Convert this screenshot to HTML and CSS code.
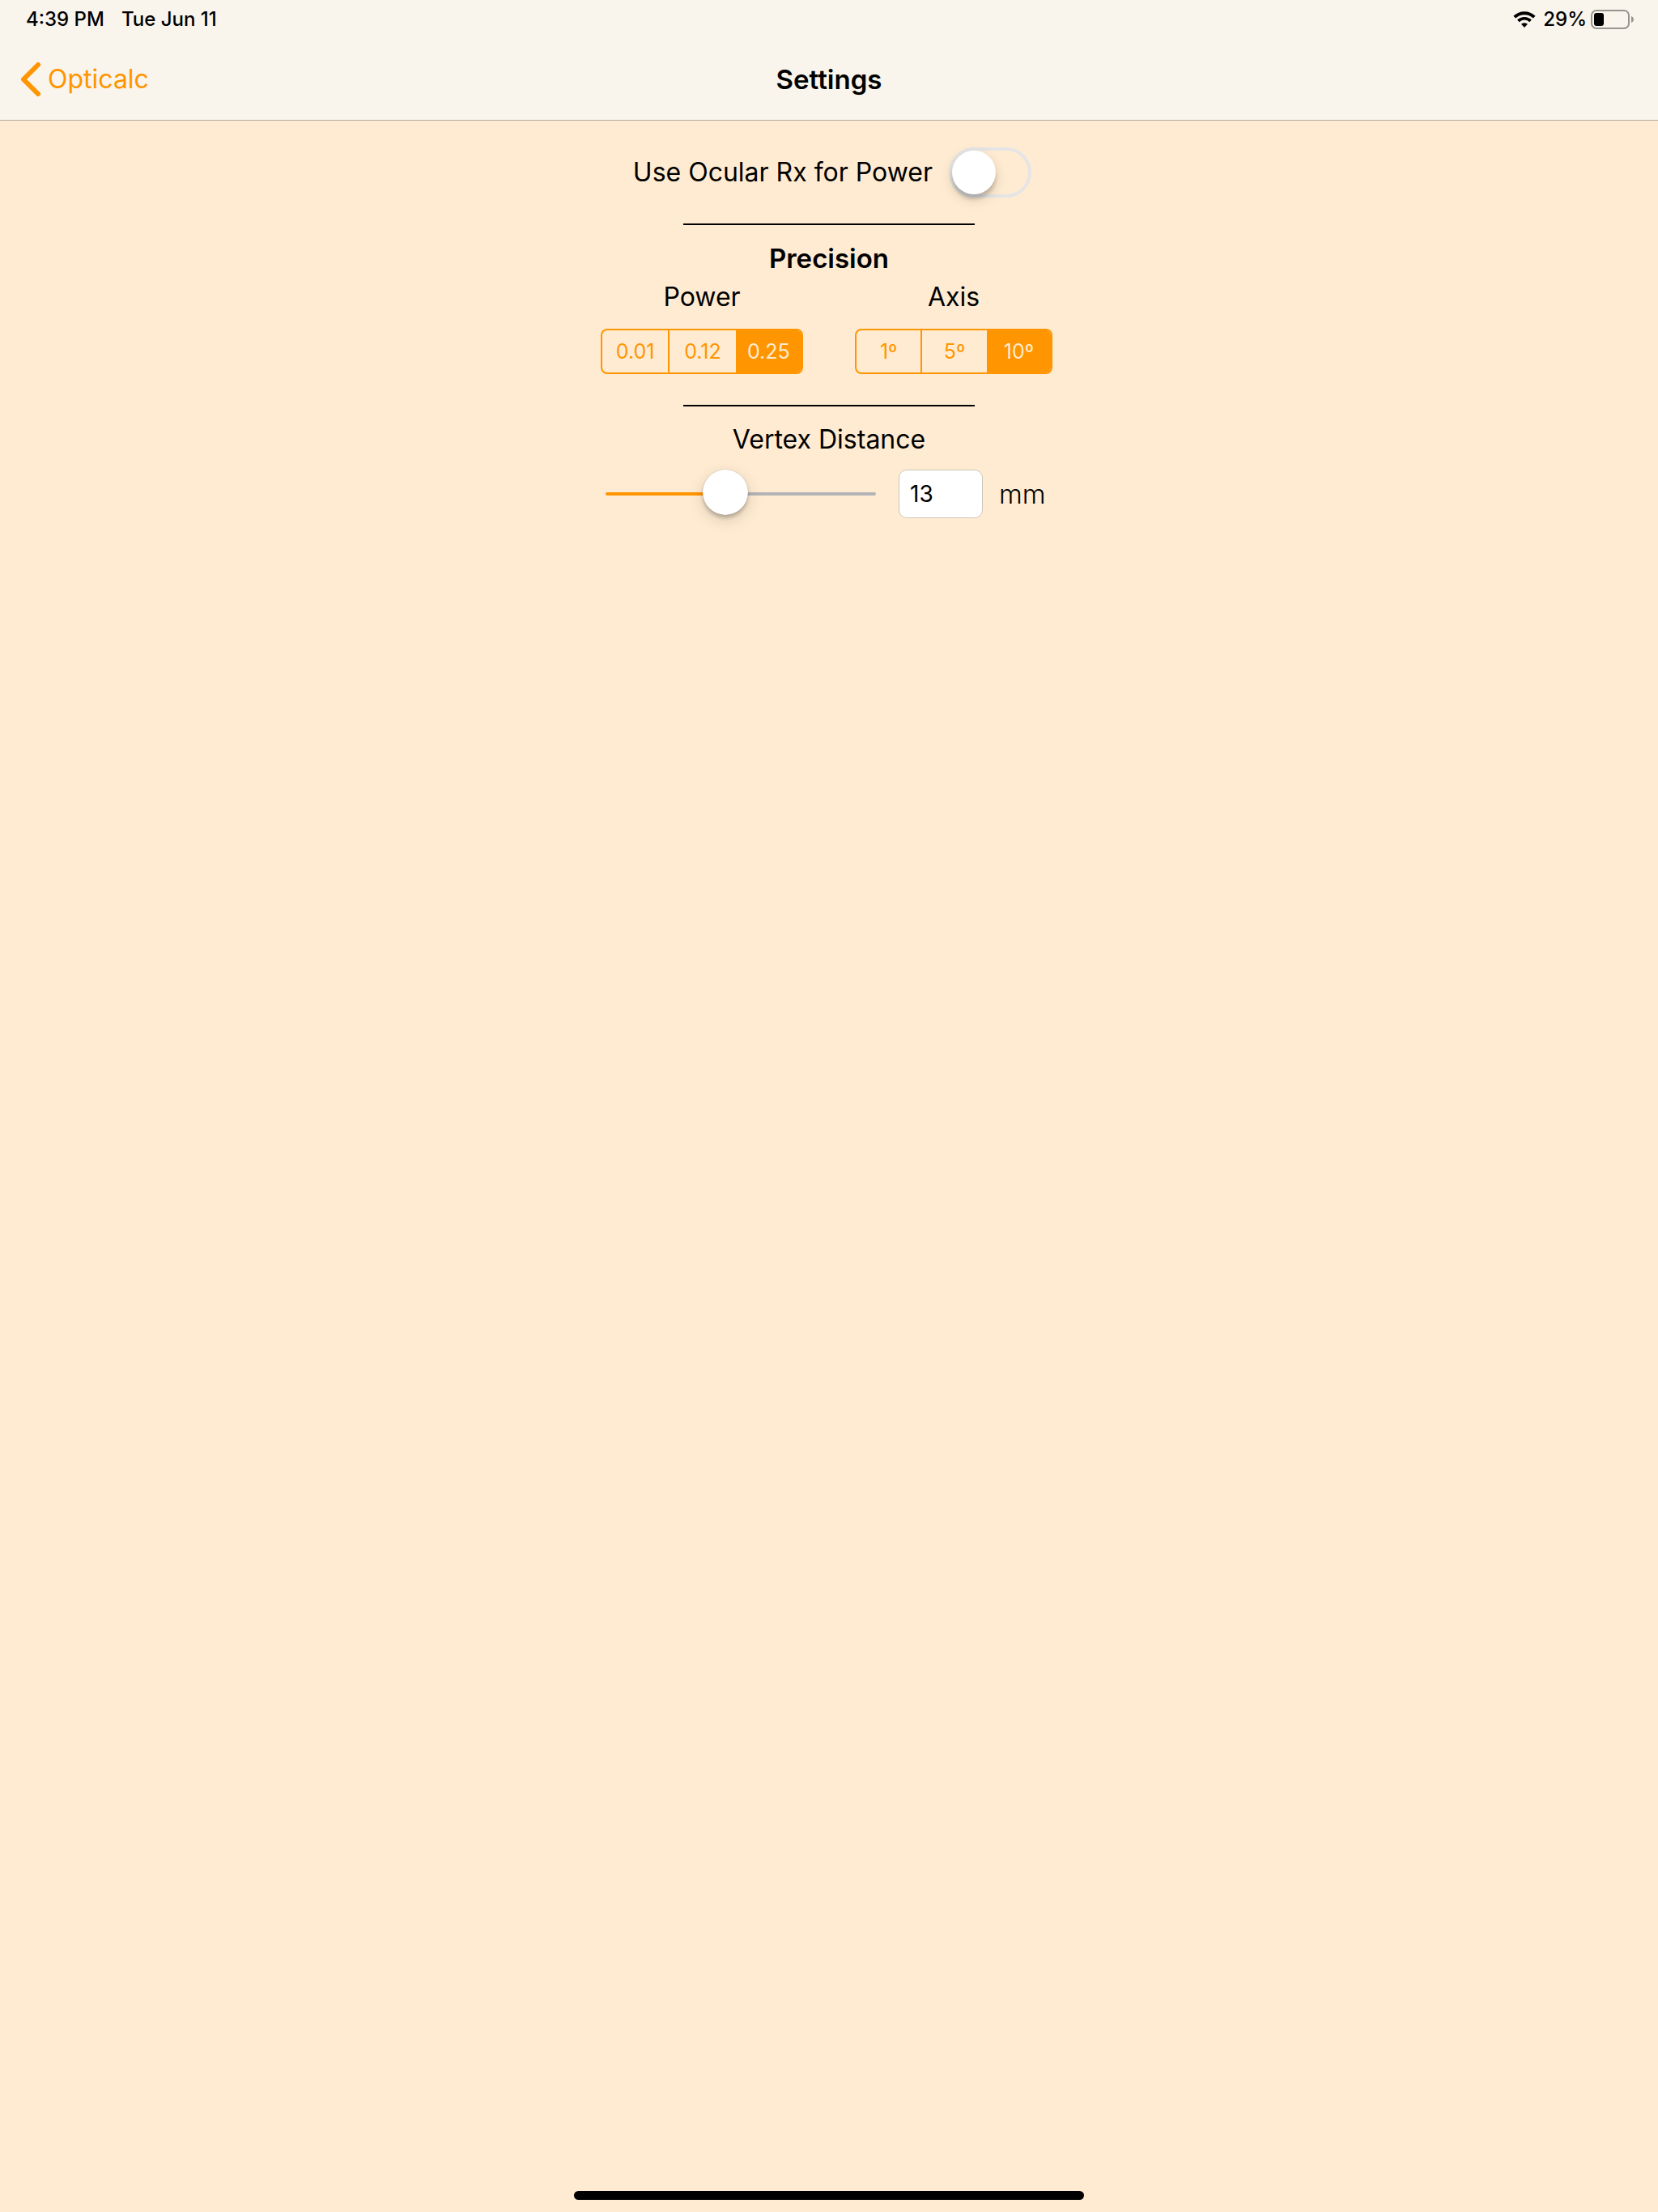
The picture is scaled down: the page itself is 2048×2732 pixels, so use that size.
FILE: index.html
```html
<!DOCTYPE html>
<html lang="en">
  <head>
    <meta charset="utf-8">
    <meta name="viewport" content="width=device-width, initial-scale=1">
    <title>Settings</title>
    <link rel="stylesheet" href="styles.css">
  </head>
  <body>
    <header class="header">
      <div class="status-bar">
        <span>4:39 PM</span>
        <span>Tue Jun 11</span>
        <svg class="wifi" viewBox="0 0 28 20" width="28" height="20" aria-hidden="true">
          <path d="M1.8 7.2a17.3 17.3 0 0 1 24.4 0" fill="none" stroke="#000" stroke-width="4"/>
          <path d="M6.4 11.9a10.8 10.8 0 0 1 15.2 0" fill="none" stroke="#000" stroke-width="3.6"/>
          <path d="M14 20l-4-4.2a5.8 5.8 0 0 1 8 0z"/>
        </svg>
        <span>29%</span>
        <svg class="battery" viewBox="0 0 54 24" width="54" height="24" aria-hidden="true">
          <rect x="1" y="1" width="46" height="22" rx="6" fill="none" stroke="#96958f" stroke-width="2"/>
          <rect x="4" y="4" width="12" height="16" rx="3"/>
          <path d="M50 8c4 1.600 4 6.400 0 8z" fill="#96958f"/>
        </svg>
      </div>
      <nav class="nav-bar">
        <a class="back" href="#">
          <svg viewBox="0 0 26 42" width="26" height="42" aria-hidden="true">
            <path d="M22 3L4 21l18 18" fill="none" stroke="#ff9500" stroke-width="6" stroke-linecap="round" stroke-linejoin="round"/>
          </svg>
          Opticalc
        </a>
        <h1 class="title">Settings</h1>
      </nav>
    </header>
    <main class="settings">
      <div class="switch-row">
        <label for="ocular">Use Ocular Rx for Power</label>
        <input id="ocular" class="switch" type="checkbox" role="switch">
      </div>
      <hr class="divider">
      <h2 class="heading">Precision</h2>
      <div class="precision">
        <div class="group group-power" role="radiogroup" aria-labelledby="power-label">
          <div id="power-label">Power</div>
          <div class="segments">
            <label class="segment"><input type="radio" name="power" value="0.01"><span>0.01</span></label>
            <label class="segment"><input type="radio" name="power" value="0.12"><span>0.12</span></label>
            <label class="segment"><input type="radio" name="power" value="0.25" checked><span>0.25</span></label>
          </div>
        </div>
        <div class="group group-axis" role="radiogroup" aria-labelledby="axis-label">
          <div id="axis-label">Axis</div>
          <div class="segments">
            <label class="segment"><input type="radio" name="axis" value="1"><span>1º</span></label>
            <label class="segment"><input type="radio" name="axis" value="5"><span>5º</span></label>
            <label class="segment"><input type="radio" name="axis" value="10" checked><span>10º</span></label>
          </div>
        </div>
      </div>
      <hr class="divider">
      <label class="vertex-label" for="vertex">Vertex Distance</label>
      <div class="vertex">
        <input id="vertex" class="slider" type="range" min="0" max="30" value="13">
        <input id="vertex-value" class="number" type="text" inputmode="numeric" value="13" aria-label="Vertex Distance in mm">
        <label class="unit" for="vertex-value">mm</label>
      </div>
    </main>
    <div class="home-indicator"></div>
    <script>
var slider = document.getElementById('vertex');
var number = document.getElementById('vertex-value');
var fillTrack = function() {
  slider.style.setProperty('--fill', (slider.value / slider.max * 100) + '%');
};
slider.addEventListener('input', function() {
  number.value = slider.value;
  fillTrack();
});
number.addEventListener('change', function() {
  slider.value = number.value;
  fillTrack();
});
fillTrack();
    </script>
  </body>
</html>
```
FILE: styles.css
```css
* {
  box-sizing: border-box;
}
body {
  display: flex;
  flex-direction: column;
  min-height: 100vh;
  margin: 0;
  color: #000;
  background-color: #ffebd1;
  font-family: Inter, "Liberation Sans", sans-serif;
  font-size: 32px;
  line-height: 40px;
}
input {
  margin: 0;
  font-family: inherit;
}

/* header */
.header {
  background-color: #f9f4ec;
  border-bottom: 1px solid #b2aa9f;
}
.status-bar {
  display: flex;
  align-items: center;
  gap: 21px;
  height: 48px;
  padding: 0 29px 0 32px;
  font-size: 24px;
  font-weight: 500;
}
.wifi {
  margin-left: auto;
  margin-right: -12px;
}
.battery {
  margin-left: -16px;
}
.nav-bar {
  display: grid;
  grid-template-columns: 1fr auto 1fr;
  align-items: center;
  height: 100px;
  padding: 0 25px;
}
.back {
  display: flex;
  align-items: center;
  gap: 8px;
  color: #ff9500;
  text-decoration: none;
}
.title,
.heading {
  margin: 0;
  font-size: 33px;
  font-weight: 600;
}

/* settings */
.settings {
  display: flex;
  flex-direction: column;
  align-items: center;
  width: 564px;
  max-width: 100%;
  margin: 0 auto;
  padding-top: 33px;
}
.switch-row {
  display: flex;
  align-items: center;
  align-self: flex-end;
  gap: 20px;
  margin-right: 32px;
}
.switch {
  appearance: none;
  width: 102px;
  height: 62px;
  border: 4px solid #e5e5e5;
  border-radius: 31px;
}
.switch::before {
  content: "";
  display: block;
  width: 54px;
  height: 54px;
  border-radius: 50%;
  background-color: #fff;
  box-shadow: 0 6px 16px rgba(0, 0, 0, 0.15), 0 6px 4px rgba(0, 0, 0, 0.16);
}
.switch:checked {
  border-color: #ff9500;
  background-color: #ff9500;
}
.switch:checked::before {
  margin-left: auto;
}
.divider {
  width: 360px;
  height: 2px;
  margin: 32px 0 21px;
  border: 0;
  background-color: #000;
}
.precision {
  display: flex;
  align-self: flex-start;
  gap: 64px;
  margin: 8px 0 6px;
}
.group {
  display: flex;
  flex-direction: column;
  gap: 19px;
  text-align: center;
}
.group-power {
  width: 250px;
}
.group-axis {
  width: 244px;
}
.segments {
  display: flex;
  height: 56px;
  border: 2px solid #ff9500;
  border-radius: 8px;
  overflow: hidden;
}
.segment {
  flex: 1;
  color: #ff9500;
  font-size: 25px;
  line-height: 52px;
  cursor: pointer;
}
.segment:not(:last-child):not(:has(+ .segment input:checked)) {
  border-right: 2px solid #ff9500;
}
.segment input {
  position: absolute;
  opacity: 0;
}
.segment span {
  display: block;
}
.segment input:checked + span {
  color: #ffebd1;
  background-color: #ff9500;
}
.vertex {
  display: flex;
  align-items: center;
  align-self: flex-start;
  margin-top: 17px;
  padding-left: 6px;
}
.slider {
  appearance: none;
  width: 334px;
  height: 60px;
  margin-right: 28px;
  background: none;
}
.slider::-webkit-slider-runnable-track {
  height: 4px;
  border-radius: 2px;
  background: linear-gradient(to right, #ff9500 var(--fill), #b4b4b8 var(--fill));
}
.slider::-webkit-slider-thumb {
  appearance: none;
  width: 56px;
  height: 56px;
  margin-top: -28px;
  border-radius: 50%;
  background-color: #fff;
  box-shadow: 0 6px 20px rgba(0, 0, 0, 0.14), 0 4px 4px rgba(0, 0, 0, 0.2), 0 0 1px rgba(0, 0, 0, 0.3);
}
.number {
  width: 104px;
  height: 60px;
  margin-right: 20px;
  padding: 0 13px;
  border: 1px solid #ccc6bc;
  border-radius: 10px;
  background-color: #fff;
  font-size: 28px;
}
.unit {
  font-size: 33px;
  font-weight: 300;
}

.home-indicator {
  width: 630px;
  max-width: 60%;
  height: 11px;
  margin: auto auto 15px;
  border-radius: 6px;
  background-color: #000;
}
```
